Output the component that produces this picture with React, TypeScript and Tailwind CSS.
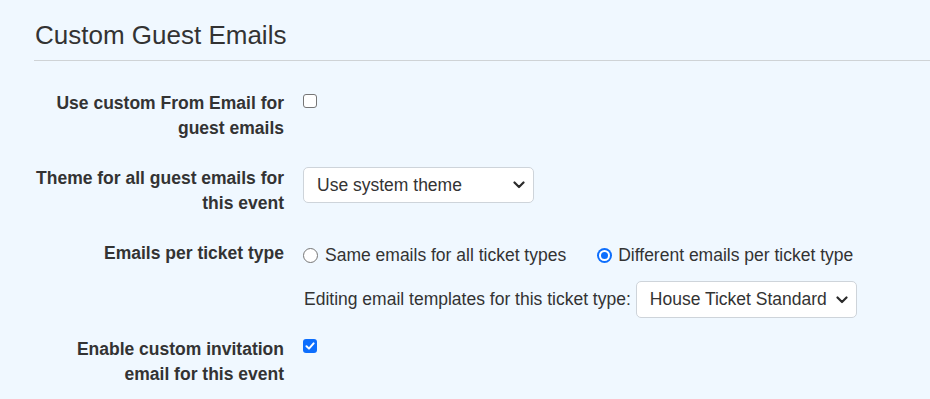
import React from 'react';

function Chevron() {
  return (
    <svg width="12" height="8" viewBox="0 0 12 8" className="shrink-0">
      <path d="M1.5 1.5 L6 6 L10.5 1.5" fill="none" stroke="#2b2b2b" strokeWidth="2.2" strokeLinecap="round" strokeLinejoin="round" />
    </svg>
  );
}

function Select({ value, width }: { value: string; width: string }) {
  return (
    <div className={`${width} h-[37px] flex items-center justify-between pl-[13px] pr-[8px] bg-white border border-[#ced4da] rounded-[5px] text-[17.5px] text-[#333]`}>
      <span>{value}</span>
      <Chevron />
    </div>
  );
}

function Checkbox({ checked }: { checked?: boolean }) {
  if (checked) {
    return (
      <div className="w-[14px] h-[14px] rounded-[3px] bg-[#0d6efd] flex items-center justify-center">
        <svg width="10" height="10" viewBox="0 0 10 10">
          <path d="M1.5 5.2 L4 7.6 L8.6 2.4" fill="none" stroke="white" strokeWidth="2" strokeLinecap="round" strokeLinejoin="round" />
        </svg>
      </div>
    );
  }
  return <div className="w-[14px] h-[14px] rounded-[3px] bg-white border border-[#767676]" />;
}

function Radio({ checked }: { checked?: boolean }) {
  if (checked) {
    return (
      <div className="w-[15px] h-[15px] rounded-full bg-[#0d6efd] flex items-center justify-center">
        <div className="w-[11px] h-[11px] rounded-full bg-white flex items-center justify-center">
          <div className="w-[7px] h-[7px] rounded-full bg-[#0d6efd]" />
        </div>
      </div>
    );
  }
  return <div className="w-[15px] h-[15px] rounded-full bg-white border border-[#767676]" />;
}

function Label({ children }: { children: React.ReactNode }) {
  return (
    <div className="w-[250px] shrink-0 text-right font-bold text-[17.5px] leading-[25px] text-[#333]">
      {children}
    </div>
  );
}

export default function App() {
  return (
    <div className="min-h-screen bg-[#f0f8ff] text-[#333]" style={{ fontFamily: '"Liberation Sans", Arial, sans-serif' }}>
      <div className="pl-[34px]">
        {/* Section heading */}
        <div className="pt-[20px] pb-[9px] border-b border-[#cfd3d6]">
          <h3 className="pl-px text-[26px] leading-[31px] text-[#333]">Custom Guest Emails</h3>
        </div>

        <div className="pt-[30px]">
          {/* From email */}
          <div className="flex gap-[19px]">
            <Label>
              Use custom From Email for
              <br />
              guest emails
            </Label>
            <div className="pt-[3px]">
              <Checkbox />
            </div>
          </div>

          {/* Theme */}
          <div className="flex gap-[19px] mt-[25px]">
            <Label>
              Theme for all guest emails for
              <br />
              this event
            </Label>
            <div className="pt-px">
              <Select value="Use system theme" width="w-[231px] !h-[36px]" />
            </div>
          </div>

          {/* Emails per ticket type */}
          <div className="flex gap-[19px] mt-[25px]">
            <Label>Emails per ticket type</Label>
            <div className="flex flex-col text-[17.5px] leading-[25px]">
              <div className="flex items-center">
                <div className="flex items-center gap-[7px] pt-[2px]">
                  <Radio />
                  <span>Same emails for all ticket types</span>
                </div>
                <div className="flex items-center gap-[6px] pt-[2px] ml-[31px]">
                  <Radio checked />
                  <span>Different emails per ticket type</span>
                </div>
              </div>
              <div className="flex items-center gap-[5px] mt-[13px]">
                <span className="pl-px">Editing email templates for this ticket type:</span>
                <Select value="House Ticket Standard" width="w-[221px]" />
              </div>
            </div>
          </div>

          {/* Invitation */}
          <div className="flex gap-[19px] mt-[19px]">
            <Label>
              Enable custom invitation
              <br />
              email for this event
            </Label>
            <div className="pt-[2px]">
              <Checkbox checked />
            </div>
          </div>
        </div>
      </div>
    </div>
  );
}
